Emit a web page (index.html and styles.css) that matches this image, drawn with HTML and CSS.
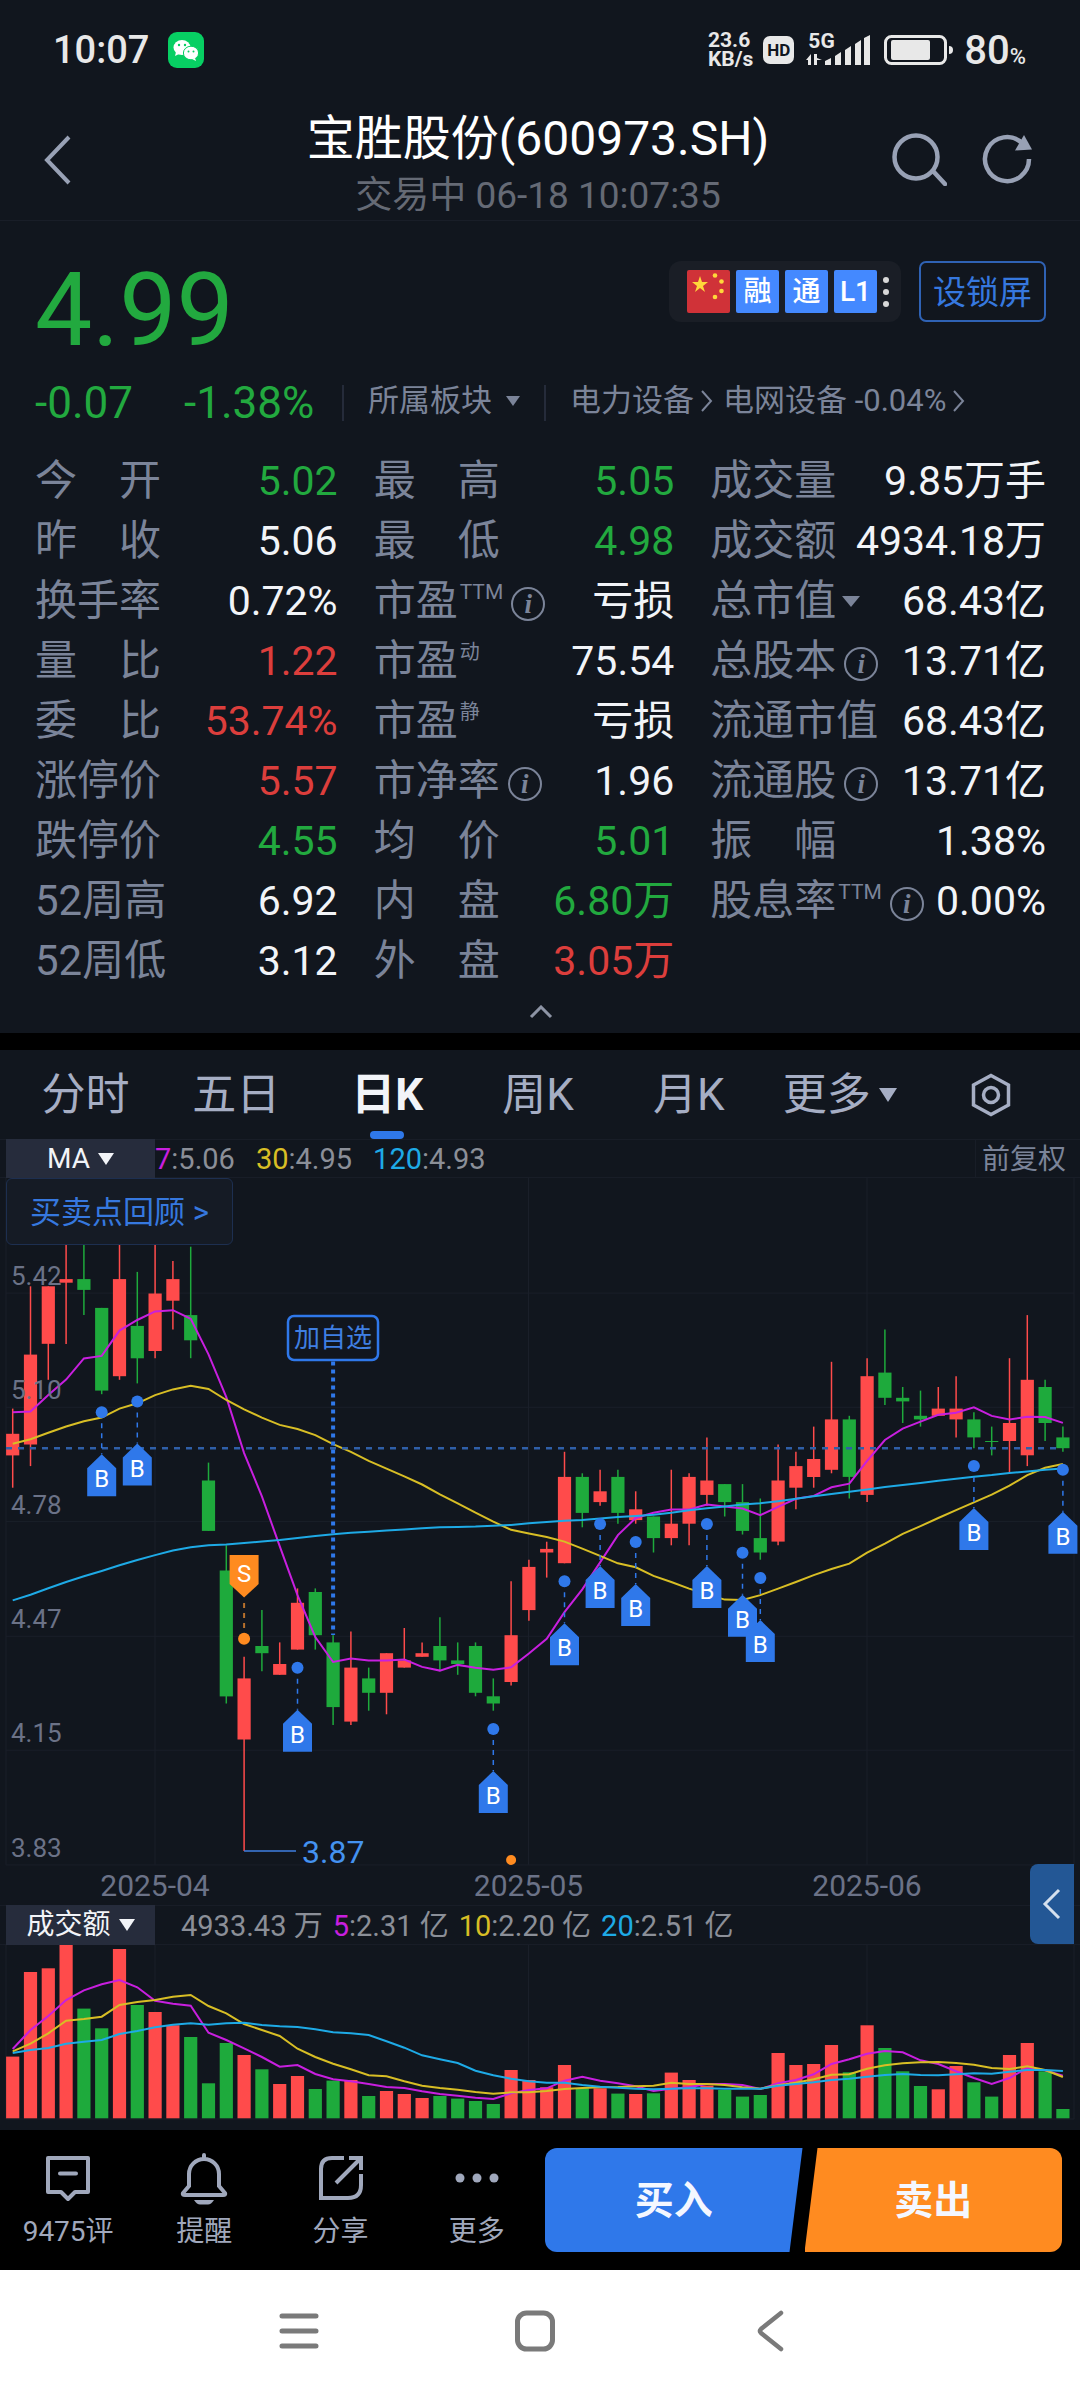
FILE: index.html
```html
<!DOCTYPE html>
<html lang="zh-CN">
<head>
<meta charset="utf-8">
<meta name="viewport" content="width=device-width, initial-scale=1">
<title>宝胜股份(600973.SH)</title>
<link rel="stylesheet" href="styles.css">
</head>
<body>
<div class="status">
  <div class="status-side">
    <span class="clock">10:07</span>
    <svg class="wechat" viewBox="0 0 36 36" width="36" height="36" aria-hidden="true">
      <rect width="36" height="36" rx="9" fill="#07cf63"/>
      <ellipse cx="14" cy="15.500" rx="8.500" ry="7.500" fill="#fff"/><path d="M8 20l-1 4 4-2z" fill="#fff"/>
      <circle cx="11" cy="13" r="1.200" fill="#07cf63"/><circle cx="17" cy="13" r="1.200" fill="#07cf63"/>
      <ellipse cx="23" cy="21" rx="7.600" ry="6.800" fill="#fff" stroke="#07cf63"/><path d="M27 26l1 3-4-2z" fill="#fff"/>
      <circle cx="20.500" cy="19.500" r="1" fill="#07cf63"/><circle cx="25.500" cy="19.500" r="1" fill="#07cf63"/>
    </svg>
  </div>
  <div class="status-side status-right">
    <span class="speed"><span>23.6</span><span>KB/s</span></span>
    <span class="hd">HD</span>
    <span class="signal">
      <span class="net">5G</span>
      <svg viewBox="0 0 64 30" width="64" height="30" aria-hidden="true">
        <g fill="#e8e8e8"><path d="M5 19v11H2v-5H0z"/><path d="M8 30V19h3v4l5 2h-5v5z" />
        <path d="M19 26l6-3v7h-6zM29 21l6-4v13h-6zM39 15l6-4v19h-6zM49 9l6-4v25h-6zM58 3l6-3v30h-6z"/></g>
      </svg>
    </span>
    <svg viewBox="0 0 70 30" width="70" height="30" aria-hidden="true">
      <rect x="1.500" y="1.500" width="60" height="27" rx="6" fill="none" stroke="#e8e8e8" stroke-width="3"/>
      <rect x="7" y="5" width="39" height="20" rx="2" fill="#e8e8e8"/><path d="M65 11q4 0 4 4t-4 4z" fill="#e8e8e8"/>
    </svg>
    <span class="battery">80<small>%</small></span>
  </div>
</div>

<header class="head">
  <button class="icon-btn" aria-label="返回">
    <svg viewBox="0 0 28 50" width="28" height="50"><path d="M25 2L3 25l22 23" fill="none" stroke="#98a1b5" stroke-width="4"/></svg>
  </button>
  <div class="head-text">
    <h1>宝胜股份(600973.SH)</h1>
    <p>交易中 06-18 10:07:35</p>
  </div>
  <div class="head-tools">
    <button class="icon-btn" aria-label="搜索">
      <svg viewBox="0 0 56 54" width="56" height="54"><g fill="none" stroke="#98a1b5" stroke-width="4.500"><circle cx="25" cy="25" r="21.500"/><path d="M42 39l12 13" stroke-linecap="round"/></g></svg>
    </button>
    <button class="icon-btn" aria-label="刷新">
      <svg viewBox="0 0 50 50" width="50" height="50"><path d="M47 25A22 22 0 1 1 40 9" fill="none" stroke="#98a1b5" stroke-width="4.500"/><path d="M42 1l8 14.500-17 1z" fill="#98a1b5"/></svg>
    </button>
  </div>
</header>

<main>
<section class="quote">
  <div class="quote-top">
    <strong class="price down">4.99</strong>
    <div class="quote-tags">
      <div class="badges">
        <svg viewBox="0 0 43 43" width="43" height="43" role="img" aria-label="中国">
          <rect width="43" height="43" rx="2" fill="#d03238"/>
          <g fill="#ffd83a"><path d="M13 6l2 6h6l-5 4 2 6-5-4-5 4 2-6-5-4h6z"/>
          <circle cx="28" cy="5.500" r="2.300"/><circle cx="34.500" cy="11.500" r="2.300"/><circle cx="34.500" cy="21" r="2.300"/><circle cx="28" cy="27" r="2.300"/></g>
        </svg>
        <span class="badge">融</span><span class="badge">通</span><span class="badge">L1</span>
        <span class="dots"><i></i><i></i><i></i></span>
      </div>
      <button class="lock">设锁屏</button>
    </div>
  </div>
  <div class="quote-sub">
    <span class="change down">-0.07</span>
    <span class="change pct down">-1.38%</span>
    <button class="sector">所属板块<svg class="caret" viewBox="0 0 14 10" width="14" height="10"><path d="M0 0h14l-7 10z"/></svg></button>
    <span class="links">
      <a href="#power">电力设备<svg class="gt" viewBox="0 0 14 24" width="14" height="24"><path d="M2 2l9 10-9 10"/></svg></a>
      <a href="#grid">电网设备 -0.04%<svg class="gt" viewBox="0 0 14 24" width="14" height="24"><path d="M2 2l9 10-9 10"/></svg></a>
    </span>
  </div>
  <div class="stats">
    <dl>
      <div><dt>今　开</dt><dd class="down">5.02</dd></div>
      <div><dt>昨　收</dt><dd>5.06</dd></div>
      <div><dt>换手率</dt><dd>0.72%</dd></div>
      <div><dt>量　比</dt><dd class="up">1.22</dd></div>
      <div><dt>委　比</dt><dd class="up">53.74%</dd></div>
      <div><dt>涨停价</dt><dd class="up">5.57</dd></div>
      <div><dt>跌停价</dt><dd class="down">4.55</dd></div>
      <div><dt>52周高</dt><dd>6.92</dd></div>
      <div><dt>52周低</dt><dd>3.12</dd></div>
    </dl>
    <dl>
      <div><dt>最　高</dt><dd class="down">5.05</dd></div>
      <div><dt>最　低</dt><dd class="down">4.98</dd></div>
      <div><dt>市盈<sup>TTM</sup><i class="info">i</i></dt><dd>亏损</dd></div>
      <div><dt>市盈<sup class="cn">动</sup></dt><dd>75.54</dd></div>
      <div><dt>市盈<sup class="cn">静</sup></dt><dd>亏损</dd></div>
      <div><dt>市净率<i class="info">i</i></dt><dd>1.96</dd></div>
      <div><dt>均　价</dt><dd class="down">5.01</dd></div>
      <div><dt>内　盘</dt><dd class="down">6.80万</dd></div>
      <div><dt>外　盘</dt><dd class="up">3.05万</dd></div>
    </dl>
    <dl>
      <div><dt>成交量</dt><dd>9.85万手</dd></div>
      <div><dt>成交额</dt><dd>4934.18万</dd></div>
      <div><dt>总市值<svg class="caret wide" viewBox="0 0 18 11" width="18" height="11"><path d="M0 0h18l-9 11z"/></svg></dt><dd>68.43亿</dd></div>
      <div><dt>总股本<i class="info">i</i></dt><dd>13.71亿</dd></div>
      <div><dt>流通市值</dt><dd>68.43亿</dd></div>
      <div><dt>流通股<i class="info">i</i></dt><dd>13.71亿</dd></div>
      <div><dt>振　幅</dt><dd>1.38%</dd></div>
      <div><dt>股息率<sup>TTM</sup><i class="info">i</i></dt><dd>0.00%</dd></div>
    </dl>
  </div>
  <button class="fold" aria-label="收起"><svg viewBox="0 0 24 14" width="24" height="14"><path d="M2 12L12 2l10 10" fill="none" stroke="#8d94a5" stroke-width="3"/></svg></button>
</section>

<section class="chart">
  <nav class="periods">
    <button>分时</button><button>五日</button><button class="on">日K</button><button>周K</button><button>月K</button>
    <button>更多<svg class="caret wide" viewBox="0 0 18 14" width="18" height="14"><path d="M0 0h18l-9 14z"/></svg></button>
    <button aria-label="设置"><svg viewBox="0 0 40 44" width="40" height="44"><g fill="none" stroke="#a6aec4" stroke-width="3.500"><path d="M20 2.500L37.500 12v20L20 41.500 2.500 32V12z"/><circle cx="20" cy="22" r="7.500"/></g></svg></button>
  </nav>
  <div class="bar">
    <button class="chip">MA<svg class="caret" viewBox="0 0 16 12" width="16" height="12"><path d="M0 0h16l-8 12z"/></svg></button>
    <ul class="legend ma">
      <li><b class="m1">7</b>:5.06</li><li><b class="m2">30</b>:4.95</li><li><b class="m3">120</b>:4.93</li>
    </ul>
    <button class="adjust">前复权</button>
  </div>
  <div class="plot">
    <svg id="kline" viewBox="0 0 1080 727" role="img" aria-label="日K线"></svg>
    <button class="review">买卖点回顾 &gt;</button>
  </div>
  <div class="bar vol-bar">
    <button class="chip">成交额<svg class="caret" viewBox="0 0 16 12" width="16" height="12"><path d="M0 0h16l-8 12z"/></svg></button>
    <ul class="legend vol">
      <li>4933.43 万</li><li><b class="m1">5</b>:2.31 亿</li><li><b class="m2">10</b>:2.20 亿</li><li><b class="m3">20</b>:2.51 亿</li>
    </ul>
    <button class="drawer" aria-label="展开"><svg viewBox="0 0 20 32" width="20" height="32"><path d="M17 2L3 16l14 14" fill="none" stroke="#d5e0ee" stroke-width="3"/></svg></button>
  </div>
  <svg id="volume" viewBox="0 0 1080 185" role="img" aria-label="成交额"></svg>
</section>
</main>

<footer class="actions">
  <div class="tools">
    <button><svg viewBox="0 0 48 52" width="48" height="52"><path d="M4 5h40v34H31l-7 7-7-7H4zM16 20.500h16" fill="none" stroke="#a0a8bc" stroke-width="4" stroke-linejoin="round" stroke-linecap="round"/></svg>9475评</button>
    <button><svg viewBox="0 0 48 52" width="48" height="52"><path d="M24 2v4M9 33V21a15 15 0 0 1 30 0v12l6 7q1 2-2 2H5q-3 0-2-2z" fill="none" stroke="#a0a8bc" stroke-width="4" stroke-linecap="round"/><path d="M14 47h20q-3 4.500-6 4.500h-8q-3 0-6-4.500z" fill="#a0a8bc"/></svg>提醒</button>
    <button><svg viewBox="0 0 48 52" width="48" height="52"><path d="M27 5H15Q4 5 4 16v29h27q13 0 13-13V21M32 5h12v12M43 6L19 30" fill="none" stroke="#a0a8bc" stroke-width="4"/></svg>分享</button>
    <button><svg viewBox="0 0 48 52" width="48" height="52"><g fill="#a0a8bc"><circle cx="7" cy="25" r="4.500"/><circle cx="24" cy="25" r="4.500"/><circle cx="41" cy="25" r="4.500"/></g></svg>更多</button>
  </div>
  <div class="trade">
    <button class="buy">买入</button>
    <button class="sell">卖出</button>
  </div>
</footer>
<div class="sysnav">
  <button class="icon-btn" aria-label="最近任务"><svg viewBox="0 0 40 42" width="40" height="42"><path d="M3 6h34M3 21h34M3 36h34" stroke="#7a7a7a" stroke-width="5" stroke-linecap="round"/></svg></button>
  <button class="icon-btn" aria-label="主屏幕"><svg viewBox="0 0 40 42" width="40" height="42"><rect x="2.500" y="3" width="35" height="36" rx="9" fill="none" stroke="#7a7a7a" stroke-width="5"/></svg></button>
  <button class="icon-btn" aria-label="后退"><svg viewBox="0 0 40 42" width="40" height="42"><path d="M30 3L10 19q-2 2 0 4l20 16" fill="none" stroke="#7a7a7a" stroke-width="4.500" stroke-linecap="round"/></svg></button>
</div>
<script src="chart.js"></script>
</body>
</html>
```

FILE: styles.css
```css
* { box-sizing: border-box; }
body {
  margin: 0;
  background: #11161e;
  color: #f2f4f8;
  font-family: Roboto, "Noto Sans CJK SC", sans-serif;
}
button {
  margin: 0;
  padding: 0;
  border: 0;
  background: none;
  color: inherit;
  font: inherit;
}
a { color: inherit; text-decoration: none; }
h1, p, dl, dd, ul { margin: 0; padding: 0; }
ul { list-style: none; }
svg { display: block; flex: none; }
.up { color: #dc3e3c; }
.down { color: #22a93f; }
.icon-btn { display: flex; align-items: center; justify-content: center; }

/* status bar */
.status {
  display: flex;
  justify-content: space-between;
  padding: 20px 54px 0 53px;
  height: 84px;
  color: #e8e8e8;
}
.status-side { display: flex; align-items: center; height: 60px; gap: 19px; }
.status-right { gap: 10px; }
.clock { font-size: 38px; font-weight: 500; }
.speed { display: flex; flex-direction: column; font-size: 21px; line-height: 19px; font-weight: 700; }
.speed span { height: 19px; }
.hd {
  width: 31px;
  height: 28px;
  border-radius: 7px;
  background: #e8e8e8;
  color: #11161e;
  font-size: 17px;
  line-height: 28px;
  font-weight: 700;
  text-align: center;
}
.signal { position: relative; display: flex; margin: 0 4px 0 2px; }
.net { position: absolute; left: 2px; top: -6px; font-size: 21px; line-height: 24px; font-weight: 700; }
.battery { font-size: 40px; font-weight: 500; }
.battery small { font-size: 22px; }

/* title */
.head {
  display: grid;
  grid-template-columns: 1fr auto 1fr;
  align-items: center;
  height: 137px;
  padding: 0 48px 0 44px;
  border-bottom: 1px solid #191e28;
}
.head > .icon-btn { justify-self: start; padding-top: 12px; }
.head-text { text-align: center; padding-top: 26px; }
.head h1 { font-size: 48px; line-height: 58px; font-weight: 400; color: #fff; }
.head p { font-size: 37px; line-height: 55px; color: #656a75; }
.head-tools { display: flex; justify-self: end; gap: 35px; padding-top: 10px; }

/* quote */
.quote { padding: 40px 34px 0 35px; }
.quote-top { display: flex; justify-content: space-between; align-items: flex-start; height: 112px; }
.price { font-size: 102px; line-height: 98px; font-weight: 400; }
.quote-tags { display: flex; gap: 18px; }
.badges {
  display: flex;
  align-items: center;
  gap: 6px;
  height: 61px;
  padding: 0 12px 0 18px;
  border-radius: 12px;
  background: #1a1e26;
}
.badge {
  width: 43px;
  height: 43px;
  border-radius: 2px;
  background: #4489ff;
  color: #fff;
  font-size: 28px;
  line-height: 43px;
  font-weight: 500;
  text-align: center;
}
.dots { display: flex; flex-direction: column; gap: 6px; }
.dots i { width: 6px; height: 6px; border-radius: 50%; background: #d8d8d8; }
.lock {
  width: 127px;
  height: 61px;
  padding-bottom: 4px;
  border: 2px solid #2f62b4;
  border-radius: 7px;
  color: #3678df;
  font-size: 33px;
}
.quote-sub { display: flex; align-items: center; height: 60px; color: #7b8499; font-size: 31px; line-height: 32px; }
.change { width: 149px; font-size: 44px; }
.pct { width: 158px; }
.sector, .links { display: flex; align-items: center; height: 36px; border-left: 2px solid #252b3a; line-height: 32px; padding-bottom: 4px; }
.sector { gap: 14px; width: 202px; padding-left: 24px; }
.links { gap: 9px; padding-left: 24px; white-space: nowrap; }
.links a { display: flex; align-items: center; gap: 6px; }
.gt path { fill: none; stroke: #7b8499; stroke-width: 2; }
.caret { fill: currentColor; }
.stats { display: grid; grid-template-columns: 302fr 300fr 335fr; gap: 36px; margin-top: 18px; }
.stats div { display: flex; justify-content: space-between; align-items: center; height: 60px; white-space: nowrap; }
.stats dt { display: flex; align-items: center; color: #7b8499; font-size: 42px; line-height: 60px; }
.stats dd { font-size: 41px; line-height: 60px; }
.stats sup { align-self: flex-start; font-size: 21px; line-height: 42px; padding-left: 2px; }
.stats sup.cn { font-size: 20px; }
.info {
  width: 34px;
  height: 34px;
  margin: 6px 0 0 8px;
  border: 2px solid #7b8499;
  border-radius: 50%;
  font: italic 700 27px/30px "Liberation Serif", serif;
  text-align: center;
}
.stats .caret { margin-left: 6px; }
.fold { display: flex; justify-content: center; width: 100%; height: 42px; padding-top: 14px; }

/* chart */
.chart { border-top: 17px solid #000; }
.periods { display: grid; grid-template-columns: repeat(7, 1fr); height: 89px; padding: 0 14px 0 10px; }
.periods button {
  position: relative;
  display: flex;
  align-items: center;
  justify-content: center;
  gap: 8px;
  color: #a6aec4;
  font-size: 44px;
  line-height: 60px;
}
.periods .on { color: #f2f4f8; font-weight: 700; }
.periods .on::after {
  content: "";
  position: absolute;
  bottom: 0;
  width: 34px;
  height: 8px;
  border-radius: 4px;
  background: #2f78ea;
}
.bar {
  position: relative;
  display: flex;
  height: 39px;
  padding: 0 6px;
  border: solid #181d27;
  border-width: 1px 0;
  color: #8b8f98;
  font-size: 28px;
  line-height: 39px;
}
.chip {
  display: flex;
  align-items: center;
  justify-content: center;
  gap: 8px;
  width: 149px;
  margin: -1px 0;
  background: #262c3c;
  color: #f2f4f8;
}
.legend { display: flex; flex: 1; font-size: 29px; }
.legend b { font-weight: 400; }
.ma { gap: 21px; }
.vol { gap: 10px; padding-left: 26px; }
.m1 { color: #c81fdf; }
.m2 { color: #d8be25; }
.m3 { color: #1eaae6; }
.adjust { padding: 0 8px 0 6px; color: #7b8499; border-left: 1px solid #181d27; }
.plot { position: relative; }
.review {
  position: absolute;
  left: 6px;
  top: 0;
  height: 67px;
  padding: 0 23px 4px;
  border: 1px solid #1d2f50;
  border-radius: 6px;
  background: #151b25;
  color: #3678df;
  font-size: 31px;
}
.vol-bar { height: 40px; line-height: 40px; }
.drawer {
  position: absolute;
  right: 6px;
  bottom: 0;
  display: flex;
  align-items: center;
  justify-content: center;
  width: 44px;
  height: 80px;
  border-radius: 8px 0 0 8px;
  background: #235795;
}
#kline, #volume { width: 100%; height: auto; }
.grid { stroke: #1a1f29; stroke-width: 1; }
.rise { fill: #ff4b4b; stroke: #ff4b4b; }
.fall { fill: #1eaa3c; stroke: #1eaa3c; }
.line { fill: none; stroke-width: 2; }
.axis { fill: #6b7287; font-size: 26px; }
.date { font-size: 30px; text-anchor: middle; }
.tag-text { fill: #fff; font-size: 24px; text-anchor: middle; }
.low { fill: #4492f0; font-size: 32px; }
.pick { fill: #3f7fe2; font-size: 26px; text-anchor: middle; }

/* bottom */
.actions { display: flex; height: 140px; padding: 18px 18px 18px 0; background: #000; }
.tools { display: grid; grid-template-columns: repeat(4, 1fr); flex: 545; color: #a0a8bc; font-size: 28px; line-height: 34px; }
.tools button { display: flex; flex-direction: column; align-items: center; gap: 10px; padding-top: 5px; }
.trade { display: flex; flex: 517; }
.trade button { flex: 1; padding-bottom: 6px; font-size: 39px; font-weight: 700; color: #f4f7ff; height: 104px; }
.trade .buy {
  border-radius: 12px;
  background: #2f78ea;
  clip-path: polygon(0 0, 100% 0, calc(100% - 13px) 100%, 0 100%);
}
.trade .sell {
  margin-left: 2px;
  border-radius: 0 12px 12px 0;
  background: #ff8b20;
  clip-path: polygon(13px 0, 100% 0, 100% 100%, 0 100%);
}
.trade .buy { border-radius: 12px 0 0 12px; }
.sysnav { display: flex; justify-content: center; gap: 196px; height: 130px; padding: 0 10px 8px 0; background: #fff; }
```

FILE: chart.js
```js
// Daily candles: [high, body top, body bottom, low, rising], prices in cents.
const candles = [
  [510,503,497,488,1],[544,525,500,494,1],[544,544,528,518,1],[560,546,545,528,1],[560,546,543,536,0],
  [538,538,515,514,0],[560,546,519,518,1],[548,533,524,517,0],[560,542,526,524,1],[551,546,540,532,1],
  [555,536,529,524,0],[495,490,476,476,0],[472,465,430,428,0],[441,435,418,387,1],[454,444,442,437,0],
  [445,439,436,436,1],[460,456,443,443,1],[460,459,447,443,0],[447,445,427,422,0],[448,438,423,422,1],
  [438,435,431,426,0],[442,442,431,425,1],[449,440,438,438,1],[445,442,441,441,1],[452,444,440,437,0],
  [445,440,439,436,0],[445,444,431,430,0],[435,430,428,426,0],[462,447,434,433,1],[468,466,454,451,1],
  [473,471,470,463,1],[498,491,467,467,1],[492,491,481,477,0],[493,487,484,483,1],[493,491,481,478,0],
  [487,482,479,478,1],[480,480,474,470,0],[493,478,474,472,1],[492,491,478,472,1],[502,490,486,483,1],
  [489,489,484,480,0],[489,484,476,475,0],[485,474,470,468,0],[500,490,473,472,1],[498,494,488,482,1],
  [505,496,491,488,1],[523,507,493,492,1],[508,507,491,485,0],[524,519,486,484,1],[532,520,513,511,0],
  [516,513,512,506,0],[515,508,507,505,0],[516,510,508,508,1],[519,510,507,502,1],[509,507,502,499,0],
  [505,501,501,497,0],[524,506,501,492,1],[536,518,497,494,1],[518,516,506,501,0],[505,502,499,498,0]
];
// Moving averages, in plot units measured down the price pane.
const ma7 = [422,420,380,342,290,284,222,196,175,172,193,280,385,522,628,750,870,973,1034,1025,1030,1030,1028,1046,1055,1041,1048,1053,1047,1013,977,912,856,790,723,681,668,660,660,648,653,658,674,654,634,627,606,597,541,490,462,445,428,423,410,431,440,433,434,448];
const ma30 = [499,488,472,457,444,435,413,400,380,366,357,365,392,415,435,453,463,478,500,519,541,560,579,599,623,645,668,690,710,719,728,739,756,774,792,802,823,838,854,868,881,882,870,854,838,821,806,793,766,744,720,701,681,662,643,624,602,576,558,549];
const ma120 = [883,869,853,838,824,811,797,784,772,761,753,748,746,742,739,735,730,725,721,717,715,712,709,706,704,703,702,700,698,694,691,688,686,682,679,676,673,668,662,657,653,648,645,640,634,628,622,617,611,605,600,595,590,585,580,576,571,567,563,560];
// Turnover bar heights and their averages.
const volumes = [185,439,450,520,329,270,508,340,319,279,244,105,226,190,147,103,127,88,113,115,67,82,73,61,67,59,52,43,145,115,93,160,90,90,74,73,75,137,115,98,85,65,70,196,160,163,220,138,279,211,141,97,87,157,108,65,190,226,141,28];
const vol5 = [507,450,408,360,331,313,300,322,362,371,377,458,480,505,531,560,555,582,598,604,612,621,624,634,642,647,653,657,640,630,625,602,590,602,610,619,633,626,622,612,612,615,627,610,600,583,552,538,521,513,517,541,552,574,594,612,594,564,571,587];
const vol10 = [514,491,460,422,417,410,375,366,360,350,345,378,400,432,450,468,506,531,551,568,586,589,604,617,624,629,636,641,637,637,633,627,624,622,621,619,617,608,612,612,615,622,626,616,608,598,584,583,566,556,550,547,546,549,554,564,567,559,570,591];
const vol20 = [519,510,504,491,485,480,462,453,442,434,430,434,430,428,435,439,441,448,457,460,465,484,503,526,538,549,572,586,596,604,608,608,615,620,623,626,628,626,625,625,626,626,626,617,612,607,600,596,590,585,582,585,586,583,580,581,575,570,570,573];
// Buy marks: [day, dot position].
const buys = [[5,422],[7,396],[16,1048],[27,1198],[31,836],[33,696],[35,740],[39,696],[41,766],[42,828],[54,554],[59,563]];

const BLUE = "#2f78ea", ORANGE = "#ff8b20";
const MA_COLORS = ["#c81fdf", "#d8be25", "#1eaae6"];
const x = i => 12.7 + i * 17.8;
const y = u => 62 + u / 2.45;
const yPrice = c => y(510 + (499 - c) * 8.812);
const n = v => v.toFixed(1);
const line = (x1, y1, x2, y2, attrs) => `<line x1="${n(x1)}" y1="${n(y1)}" x2="${n(x2)}" y2="${n(y2)}" ${attrs}/>`;
const series = (values, toY, color) =>
  `<polyline class="line" stroke="${color}" points="${values.map((v, i) => n(x(i)) + "," + n(toY(v))).join(" ")}"/>`;
const months = [155, 528.5, 867];

function drawKline() {
  let s = "";
  [130, 410, 690, 971, 1250, 1531].forEach(u => { s += line(6, y(u), 1074, y(u), 'class="grid"'); });
  [6, ...months, 1074].forEach(v => { s += line(v, 0, v, y(1531), 'class="grid"'); });
  candles.forEach(([hi, top, bottom, lo, rising], i) => {
    const cls = rising ? "rise" : "fall";
    const h = Math.max(yPrice(bottom) - yPrice(top), 1);
    s += `<g class="${cls}" stroke-width="1.500">` + line(x(i), yPrice(hi), x(i), yPrice(lo), "");
    s += `<rect x="${n(x(i) - 6.6)}" y="${n(yPrice(top))}" width="13.2" height="${n(h)}" stroke="none"/></g>`;
  });
  s += series(ma7, y, MA_COLORS[0]) + series(ma30, y, MA_COLORS[1]) + series(ma120, y, MA_COLORS[2]);
  s += line(6, y(510), 1062, y(510), 'stroke="#2f5fa8" stroke-width="2.500" stroke-dasharray="6 6"');
  [["5.42", 110], ["5.10", 390], ["4.78", 671], ["4.47", 951], ["4.15", 1230], ["3.83", 1511]].forEach(([t, u]) => {
    s += `<text class="axis" x="11" y="${n(y(u))}">${t}</text>`;
  });
  ["2025-04", "2025-05", "2025-06"].forEach((t, i) => {
    s += `<text class="axis date" x="${months[i]}" y="718">${t}</text>`;
  });

  // watch-list mark
  s += line(x(18), y(298), x(18), y(968), `stroke="${BLUE}" stroke-width="4" stroke-dasharray="4 4"`);
  s += `<rect x="288" y="138" width="90" height="44" rx="6" fill="#11161e" stroke="${BLUE}" stroke-width="2.500"/>`;
  s += '<text class="pick" x="333" y="169">加自选</text>';

  // lowest price
  s += line(x(13), y(1497), 296, y(1497), 'stroke="#3f7fe2" stroke-width="1.500"');
  s += `<text class="low" x="302" y="${n(y(1526))}">3.87</text>`;
  s += `<circle cx="${n(x(28))}" cy="${n(y(1519))}" r="5" fill="${ORANGE}"/>`;

  buys.forEach(([i, u]) => {
    const cx = x(i), cy = y(u), tip = cy + 42;
    s += line(cx, cy + 11, cx, tip, `stroke="${BLUE}" stroke-width="1.500" stroke-dasharray="5 5"`);
    s += `<circle cx="${n(cx)}" cy="${n(cy)}" r="6" fill="${BLUE}"/>`;
    s += `<path d="M${n(cx)} ${n(tip)}l14.500 14v28h-29v-28z" fill="${BLUE}"/>`;
    s += `<text class="tag-text" x="${n(cx)}" y="${n(tip + 33)}">B</text>`;
  });
  const sx = x(13), sy = y(772);
  s += line(sx, y(889), sx, y(955), 'stroke="#b8702c" stroke-width="2" stroke-dasharray="5 5"');
  s += `<circle cx="${n(sx)}" cy="${n(y(977))}" r="6" fill="${ORANGE}"/>`;
  s += `<path d="M${n(sx - 14.5)} ${n(sy)}h29v29l-14.500 13.500-14.500-13.500z" fill="${ORANGE}"/>`;
  s += `<text class="tag-text" x="${n(sx)}" y="${n(sy + 27)}">S</text>`;
  document.getElementById("kline").innerHTML = s;
}

function drawVolume() {
  let s = "";
  [6, ...months, 1074].forEach(v => { s += line(v, 0, v, 174, 'class="grid"'); });
  s += line(6, 174, 1074, 174, 'class="grid"');
  volumes.forEach((v, i) => {
    s += `<g class="${candles[i][4] ? "rise" : "fall"}"><rect stroke="none" x="${n(x(i) - 6.6)}" y="${n(173.3 - v / 3)}" width="13.2" height="${n(v / 3)}"/></g>`;
  });
  const toY = u => u / 3 - 65;
  s += series(vol5, toY, MA_COLORS[0]) + series(vol10, toY, MA_COLORS[1]) + series(vol20, toY, MA_COLORS[2]);
  document.getElementById("volume").innerHTML = s;
}

drawKline();
drawVolume();
```
